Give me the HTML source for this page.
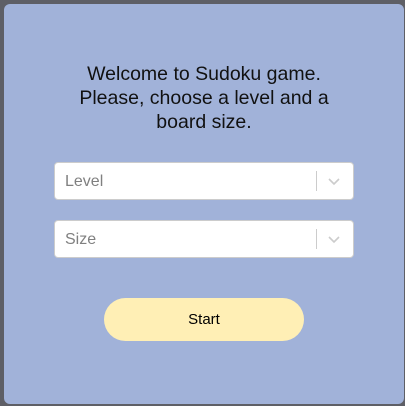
<!DOCTYPE html>
<html><head><style>
html,body{margin:0;padding:0;width:405px;height:406px;background:#5e5f66;overflow:hidden}
.card{position:absolute;left:4px;top:4px;width:400px;height:400px;background:#a1b2d9;border-radius:6px;}
h1{position:absolute;left:0;width:400px;top:58px;margin:0;text-align:center;font:400 19.5px/24px "Liberation Sans",sans-serif;color:#111;}
.sel{position:absolute;left:50px;background:#fff;border:1px solid #ccc;border-radius:4px;box-sizing:border-box;width:300px;height:38px}
.sel span{position:absolute;left:10px;top:10px;font:16px "Liberation Sans",sans-serif;color:#808080}
.sel i{position:absolute;left:261px;top:8px;width:1px;height:20px;background:#ccc}
.sel svg{position:absolute;left:272px;top:11px}
.btn{position:absolute;left:100px;top:294px;width:200px;height:43px;background:#ffefb5;border-radius:22px;text-align:center;font:15px/43px "Liberation Sans",sans-serif;color:#000}
</style></head><body>
<div class="card">
<h1>Welcome to Sudoku game.<br>Please, choose a level and a<br>board size.</h1>
<div class="sel" style="top:158px"><span>Level</span><i></i><svg width="14" height="14" viewBox="0 0 14 14"><path d="M2 5l5 5 5-5" fill="none" stroke="#ccc" stroke-width="1.6"/></svg></div>
<div class="sel" style="top:216px"><span>Size</span><i></i><svg width="14" height="14" viewBox="0 0 14 14"><path d="M2 5l5 5 5-5" fill="none" stroke="#ccc" stroke-width="1.6"/></svg></div>
<div class="btn">Start</div>
</div>
</body></html>
